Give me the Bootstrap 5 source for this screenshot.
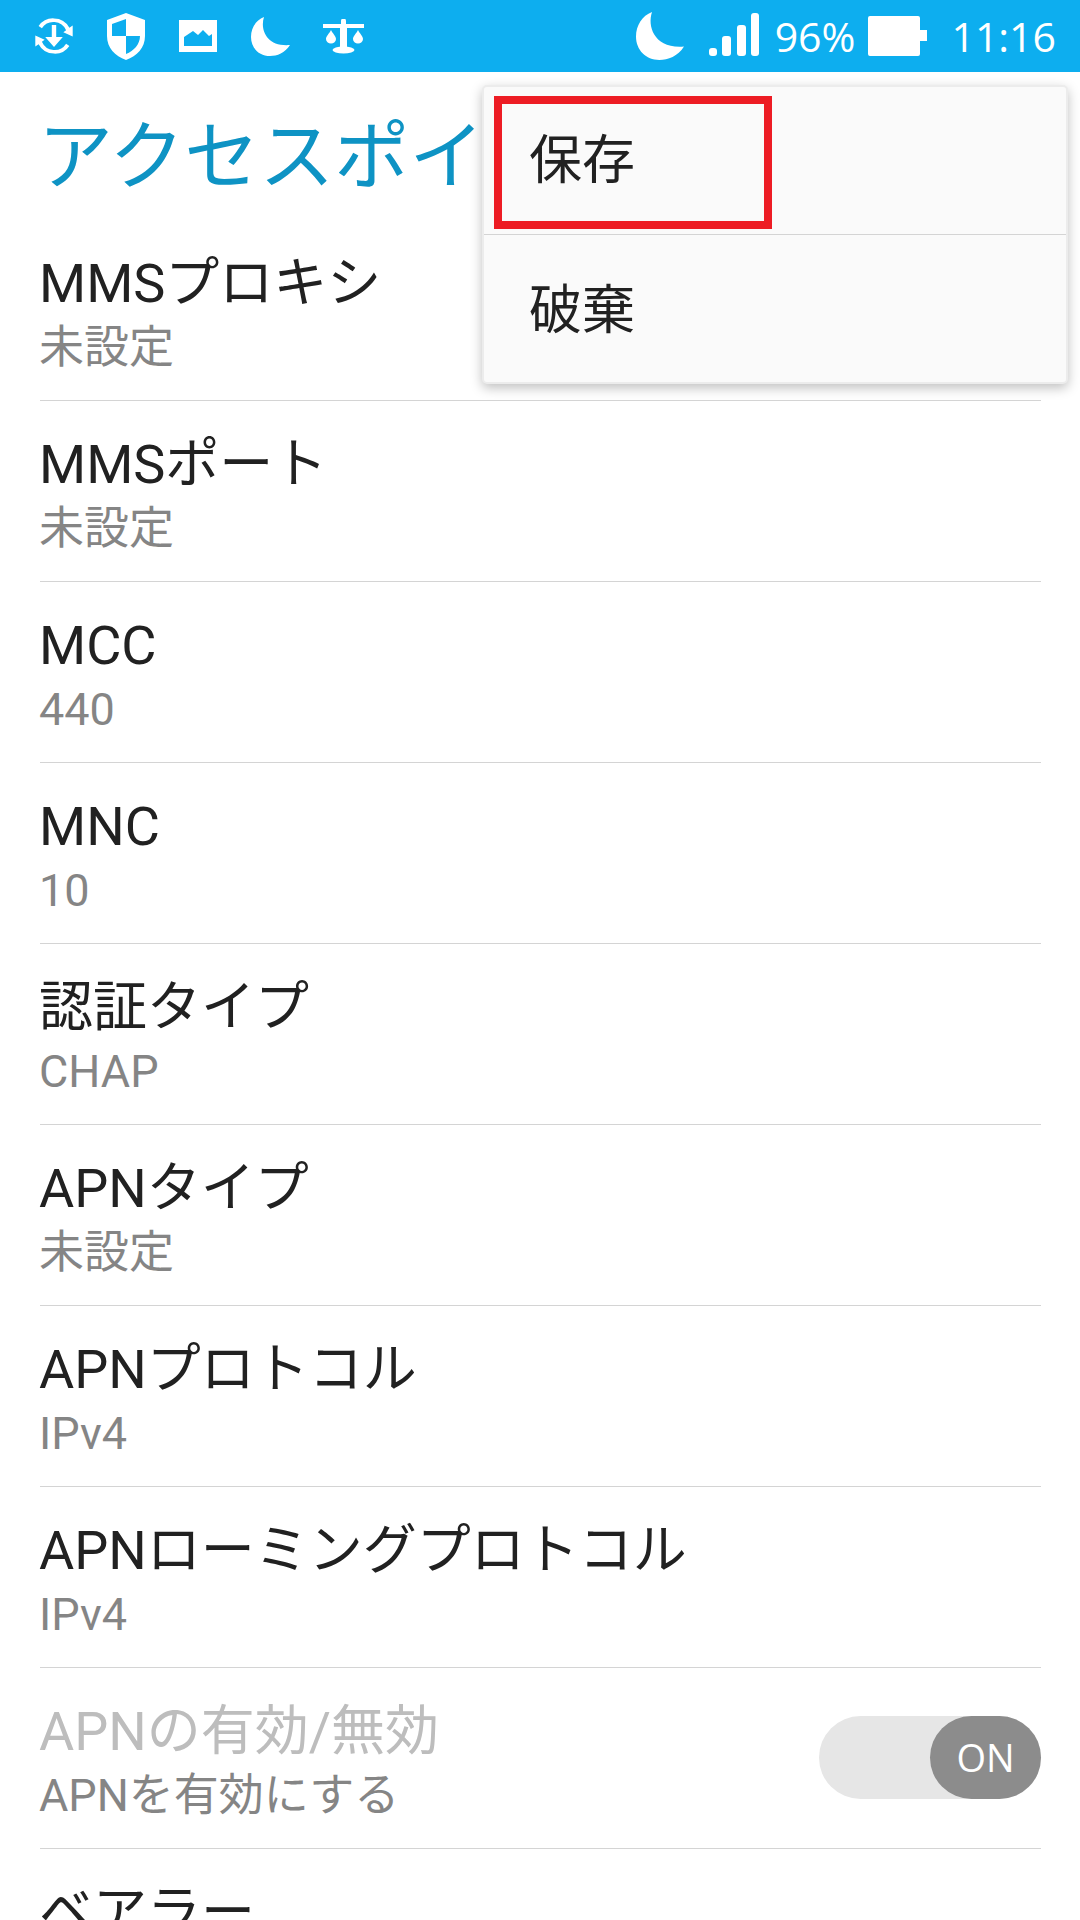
<!DOCTYPE html>
<html lang="ja">
<head>
    <meta charset="UTF-8">
    <meta name="viewport" content="width=device-width, initial-scale=1.0">
    <title>アクセスポイント</title>
    <link rel="stylesheet" href="https://cdn.jsdelivr.net/npm/bootstrap@5.3.0/dist/css/bootstrap.min.css">
    <style>
        html, body {
            height: 1920px;
            overflow: hidden;
        }
        body {
            background: #fff;
            font-family: Roboto, "Noto Sans CJK JP", sans-serif;
            color: #212121;
        }
        .status-bar {
            height: 72px;
            background: #0daeef;
            padding: 0 24px 0 32px;
            color: #fff;
            font-family: "Open Sans", sans-serif;
            font-size: 41px;
            font-weight: 500;
            line-height: 72px;
        }
        .status-bar svg {
            display: block;
            fill: #fff;
        }
        .ap-title {
            height: 148px;
            padding: 22px 0 0 38px;
            font-size: 75px;
            color: #0e93c4;
            white-space: nowrap;
            overflow: hidden;
        }
        .ap-list {
            margin: 0 39px 0 40px;
        }
        .ap-row {
            height: 181px;
            border-bottom: 1px solid #d4d4d4;
            padding-top: 31px;
        }
        .ap-row-text {
            margin-left: -1px;
        }
        .ap-row-name {
            font-size: 54px;
            line-height: 66px;
        }
        .ap-row-value {
            font-size: 45px;
            line-height: 62px;
            color: #858585;
        }
        .ap-row.disabled .ap-row-name {
            color: #bdbdbd;
        }
        .ap-toggle {
            width: 222px;
            height: 83px;
            margin-top: 17px;
            border-radius: 42px;
            background: #e6e6e6;
        }
        .ap-toggle-thumb {
            width: 111px;
            height: 83px;
            border-radius: 42px;
            background: #8c8c8c;
            color: #fff;
            font-family: "Open Sans", sans-serif;
            font-size: 38px;
        }
        .popup-menu {
            top: 85px;
            left: 482px;
            width: 586px;
            height: 299px;
            background: #fafafa;
            border: 2px solid #ececec;
            border-radius: 5px;
            box-shadow: 0 4px 12px rgba(0, 0, 0, .25);
            font-size: 53px;
        }
        .popup-item {
            height: 147px;
            padding: 2px 0 0 45px;
        }
        .popup-item + .popup-item {
            height: 150px;
            padding-top: 5px;
            border-top: 1px solid #d4d4d4;
        }
        .save-mark {
            top: 96px;
            left: 494px;
            width: 278px;
            height: 133px;
            border: 8px solid #ed1c24;
        }
    </style>
</head>
<body>
    <div class="status-bar d-flex align-items-center justify-content-between">
        <div class="d-flex align-items-center">
            <svg width="44" height="44" viewBox="0 0 40 40" style="margin-right:31px">
                <path d="M20 4a16 16 0 0 1 14 8.500l3-2v10l-8.500-4 2.500-1.700A12.500 12.500 0 0 0 9 13l-3-2A16 16 0 0 1 20 4zM20 36A16 16 0 0 1 6 27.500l-3 2v-10l8.500 4L9 25.200A12.500 12.500 0 0 0 31 27l3 2a16 16 0 0 1-14 7z"/>
                <path d="M18 10h4v11h6l-8 9-8-9h6z"/>
            </svg>
            <svg width="38" height="47" viewBox="0 0 38 47" style="margin-right:34px">
                <path d="M19 0 38 7v16c0 12-8 20-19 24C8 43 0 35 0 23V7zM19 6 5 11v12h14zM19 23v18c8-3 14-10 14-18z" fill-rule="evenodd"/>
            </svg>
            <svg width="38" height="32" viewBox="0 0 38 32" style="margin-right:34px">
                <path d="M0 0h38v32H0zM5 26h28V14l-3 2-6-6-5 5-5-4-9 6z" fill-rule="evenodd"/>
            </svg>
            <svg width="39" height="39" viewBox="0 0 39 39" style="margin-right:33px">
                <path d="M13 0C9 12 15 30 39 28 34 36 26 39 19 39 8 39 0 31 0 20 0 11 5 3 13 0z"/>
            </svg>
            <svg width="41" height="35" viewBox="0 0 41 35">
                <path d="M18 5V2a2.500 2.500 0 0 1 5 0v3h18v4H24v20h-7V9H0V5z"/>
                <ellipse cx="20.500" cy="31" rx="11" ry="3.500"/>
                <path d="M8 11c2 4 5 6 5 9a5 4.500 0 0 1-10 0c0-3 3-5 5-9zM35 11c2 4 5 6 5 9a5 4.500 0 0 1-10 0c0-3 3-5 5-9z"/>
            </svg>
        </div>
        <div class="d-flex align-items-center">
            <svg width="48" height="48" viewBox="0 0 39 39" style="margin-right:25px">
                <path d="M13 0C9 12 15 30 39 28 34 36 26 39 19 39 8 39 0 31 0 20 0 11 5 3 13 0z"/>
            </svg>
            <svg width="50" height="44" viewBox="0 0 50 44" style="margin-right:16px;margin-top:-2px">
                <rect x="0" y="35" width="8" height="8" rx="3"/>
                <rect x="13" y="23" width="9" height="20" rx="3"/>
                <rect x="28" y="12" width="9" height="31" rx="3"/>
                <rect x="42" y="0" width="8" height="43" rx="3"/>
            </svg>
            <span style="margin-right:13px">96%</span>
            <svg width="59" height="40" viewBox="0 0 59 40" style="margin-right:24px">
                <path d="M2 0h48a2 2 0 0 1 2 2v12h7v11h-7v13a2 2 0 0 1-2 2H2a2 2 0 0 1-2-2V2a2 2 0 0 1 2-2z"/>
            </svg>
            <span>11:16</span>
        </div>
    </div>

    <div class="ap-title d-flex align-items-center">アクセスポイント</div>

    <div class="ap-list" id="ap-list"></div>

    <div class="popup-menu position-absolute">
        <div class="popup-item d-flex align-items-center">保存</div>
        <div class="popup-item d-flex align-items-center">破棄</div>
    </div>
    <div class="save-mark position-absolute"></div>

    <script>
        const rows = [
            {name: "MMSプロキシ", value: "未設定"},
            {name: "MMSポート", value: "未設定"},
            {name: "MCC", value: "440"},
            {name: "MNC", value: "10"},
            {name: "認証タイプ", value: "CHAP"},
            {name: "APNタイプ", value: "未設定"},
            {name: "APNプロトコル", value: "IPv4"},
            {name: "APNローミングプロトコル", value: "IPv4"},
            {name: "APNの有効/無効", value: "APNを有効にする", toggle: true},
            {name: "ベアラー", value: ""}
        ];

        const list = document.getElementById("ap-list");
        rows.forEach(row => {
            const div = document.createElement("div");
            div.className = "ap-row d-flex justify-content-between" + (row.toggle ? " disabled" : "");
            div.innerHTML = `
                <div class="ap-row-text">
                    <div class="ap-row-name">${row.name}</div>
                    <div class="ap-row-value">${row.value}</div>
                </div>
                ${row.toggle ? '<div class="ap-toggle d-flex justify-content-end"><div class="ap-toggle-thumb d-flex align-items-center justify-content-center">ON</div></div>' : ""}
            `;
            list.appendChild(div);
        });
    </script>
    <script src="https://cdn.jsdelivr.net/npm/bootstrap@5.3.0/dist/js/bootstrap.bundle.min.js"></script>
</body>
</html>
